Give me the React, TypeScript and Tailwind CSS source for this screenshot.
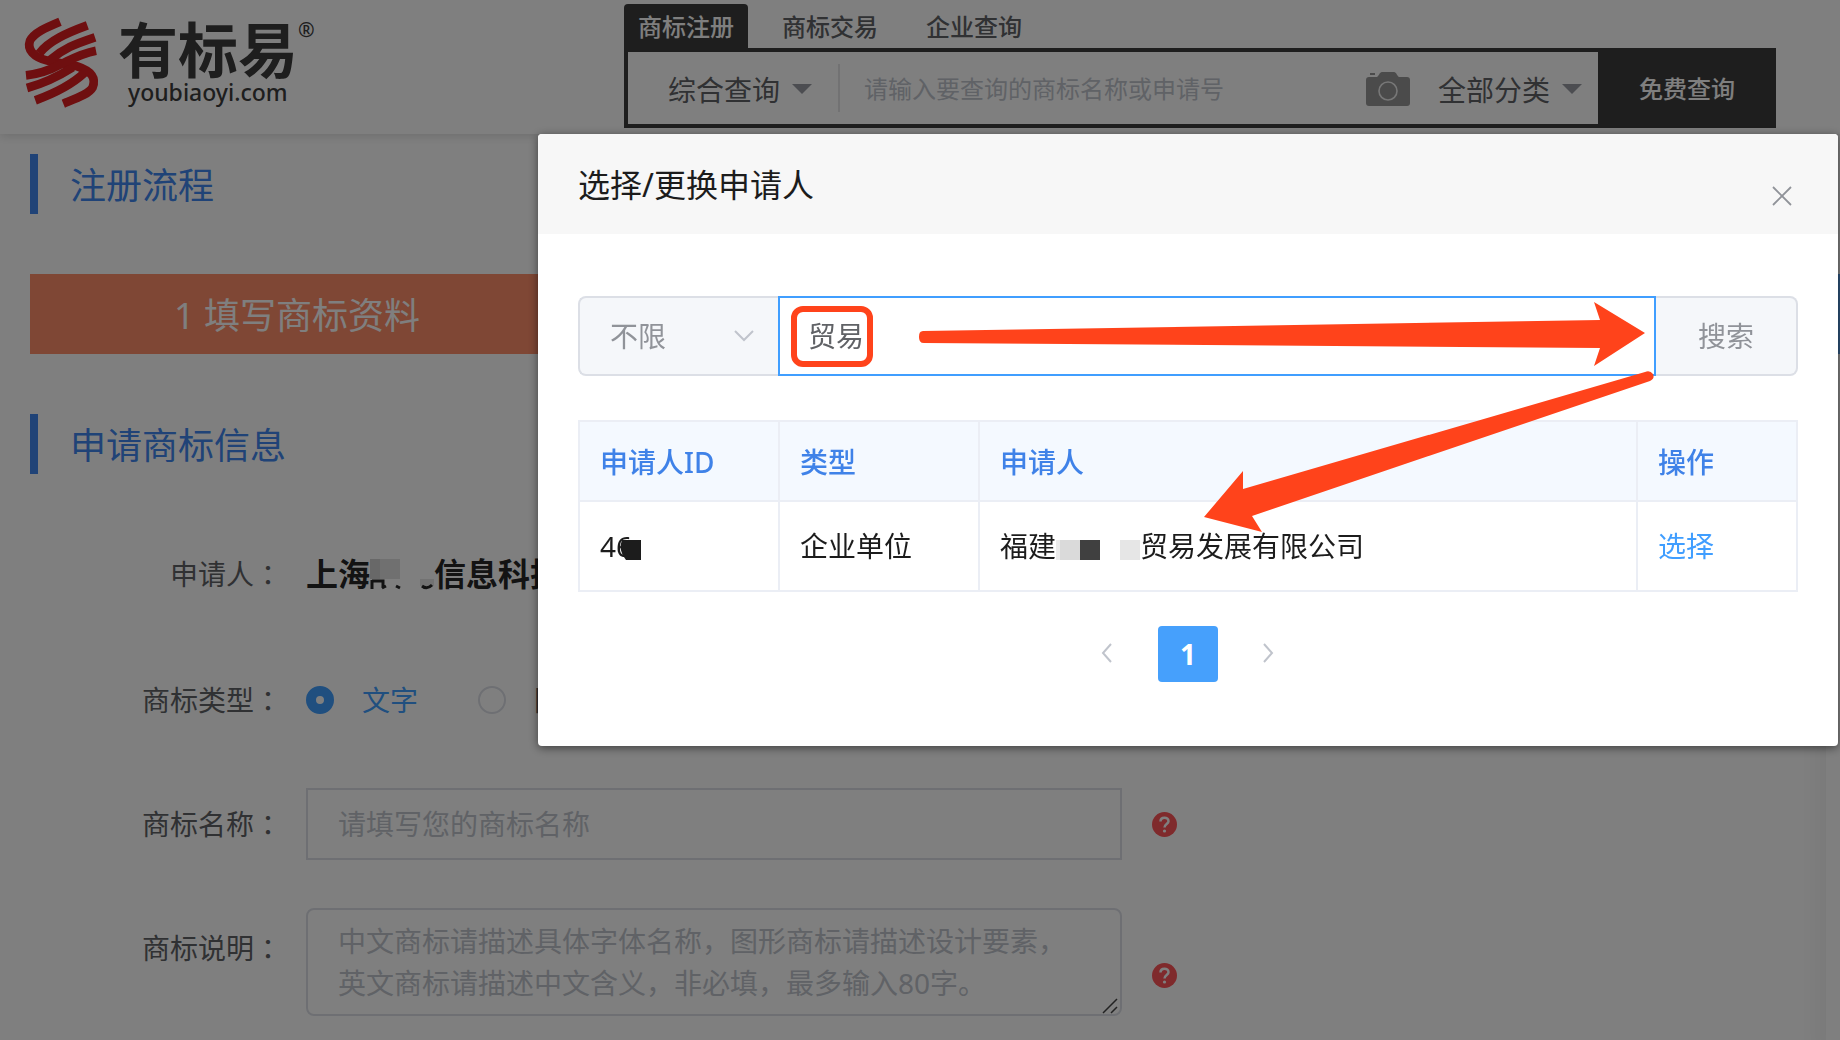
import type { ReactNode } from 'react';

const searchTabs = ['商标注册', '商标交易', '企业查询'];

function LogoMark() {
  return (
    <svg viewBox="0 0 300 315" className="h-[105px] w-[100px] shrink-0" fill="none" stroke="#de1e20" strokeWidth="26" aria-hidden="true">
      <path d="M138 35 C95 53 60 68 48 92 C38 120 60 142 100 152 C130 160 160 160 190 169 C235 184 246 205 236 232 C225 252 190 264 148 281" />
      <path d="M220 46 C160 68 105 92 76 130" />
      <path d="M243 82 C180 103 150 115 108 150" />
      <path d="M246 122 C195 132 165 152 138 164 C105 182 75 192 36 196" />
      <path d="M39 234 C100 217 135 198 176 172" />
      <path d="M64 271 C122 250 180 218 212 188" />
    </svg>
  );
}

function Camera() {
  return (
    <svg viewBox="0 0 44 35" className="h-[35px] w-11" aria-hidden="true">
      <path d="M3 5H11C13 4 13.500 0 16 0H28C30.500 0 31 4 33 5H41Q44 5 44 8V31Q44 34 41 34H3Q0 34 0 31V8Q0 5 3 5Z" fill="#969696" />
      <rect x="4" y="1" width="5" height="2" fill="#969696" />
      <circle cx="22" cy="19" r="9" fill="none" stroke="#eee" strokeWidth="1.6" />
    </svg>
  );
}

function HeaderSelect({ label, value }: { label: string; value: string }) {
  return (
    <div className="relative w-36 shrink-0">
      <select aria-label={label} className="h-11 w-full appearance-none bg-transparent pt-1 text-[28px] leading-10 text-[#606266] outline-none">
        <option>{value}</option>
      </select>
      <svg viewBox="0 0 20 10" className="pointer-events-none absolute top-[18px] right-0 h-[10px] w-5" aria-hidden="true">
        <path d="M0 0H20L10 10Z" fill="#989ba3" />
      </svg>
    </div>
  );
}

function SectionTitle({ children }: { children: ReactNode }) {
  return (
    <h2 className="flex h-[60px] items-center border-l-8 border-[#4086ee] pt-1 pl-8 text-4xl text-[#4086ee]">{children}</h2>
  );
}

function FieldLabel({ text, htmlFor, className = 'h-[72px]' }: { text: string; htmlFor?: string; className?: string }) {
  return (
    <label htmlFor={htmlFor} className={`mr-6 flex w-[252px] shrink-0 items-center justify-end text-[#606266] ${className}`}>
      {text}
      <span className="font-['Noto_Sans_CJK_TC',sans-serif]">：</span>
    </label>
  );
}

function HelpIcon({ className = '' }: { className?: string }) {
  return (
    <button type="button" aria-label="帮助" className={`ml-[30px] size-[25px] shrink-0 ${className}`}>
      <svg viewBox="0 0 25 25" fill="none">
        <circle cx="12.500" cy="12.500" r="12.500" fill="#ff5459" />
        <path d="M8.500 9.500C8.500 4.600 16.500 4.600 16.500 9.200C16.500 12 12.500 12 12.500 15.500" stroke="#fff" strokeWidth="2.500" />
        <circle cx="12.500" cy="19" r="1.600" fill="#fff" />
      </svg>
    </button>
  );
}

function Header() {
  return (
    <header className="relative z-10 flex h-[134px] bg-white shadow-[0_2px_10px_rgba(0,0,0,0.15)]">
      <a href="#" className="flex w-[624px] shrink-0 items-start pt-[10px] pl-[14px] text-[#3c3c3c]">
        <LogoMark />
        <span className="ml-1 flex flex-col">
          <span className="flex items-start">
            <span className="mt-1 text-[60px] leading-[72px] font-bold">有标易</span>
            <span className="mt-1 text-xl leading-8 font-medium">®</span>
          </span>
          <span className="-mt-2 ml-[10px] text-[23px] leading-7 font-medium">youbiaoyi.com</span>
        </span>
      </a>
      <div className="mr-16 flex-1 pt-1">
        <nav className="flex h-11 gap-5">
          {searchTabs.map((tab, i) => (
            <a
              key={tab}
              href="#"
              className={
                i === 0
                  ? 'flex w-[124px] items-center justify-center rounded-t bg-[#3c3c3c] pt-[2px] text-2xl font-medium text-white'
                  : 'flex w-[124px] items-center justify-center pt-[2px] text-2xl font-medium text-[#606266]'
              }
            >
              {tab}
            </a>
          ))}
        </nav>
        <form className="flex h-20">
          <div className="flex min-w-0 flex-1 items-center border-4 border-r-0 border-[#3c3c3c] pr-4 pl-10">
            <HeaderSelect label="查询方式" value="综合查询" />
            <div className="ml-[26px] h-12 w-[2px] shrink-0 bg-[#e4e4e6]" />
            <input
              aria-label="商标查询"
              placeholder="请输入要查询的商标名称或申请号"
              className="min-w-0 flex-1 px-6 pt-[2px] text-2xl text-[#606266] outline-none placeholder:text-[#c0c4cc]"
            />
            <button type="button" aria-label="图片查询" className="mt-[2px] mr-7">
              <Camera />
            </button>
            <HeaderSelect label="分类" value="全部分类" />
          </div>
          <button type="button" className="w-[178px] shrink-0 bg-[#3c3c3c] pt-[2px] text-2xl font-medium text-white">
            免费查询
          </button>
        </form>
      </div>
    </header>
  );
}

function RegistrationForm() {
  return (
    <form className="flex flex-col pt-16 pb-12">
      <div className="mb-[54px] flex items-center">
        <FieldLabel text="申请人" />
        <p className="flex items-center text-[32px] font-bold whitespace-nowrap text-[#262626]">
          上海
          <svg viewBox="0 0 64 32" className="h-8 w-16" aria-hidden="true">
            <rect y="1" width="10" height="20" fill="#d0d0d0" />
            <rect x="10" y="1" width="20" height="20" fill="#e0e0e0" />
            <rect x="50" y="21" width="20" height="7" fill="#e4e4e4" />
            <path d="M2 22V31M2 23H13V30M16 28L12 30M26 28L30 30M52 28Q57 32 62 27" fill="none" stroke="#262626" strokeWidth="3" />
          </svg>
          信息科技
        </p>
      </div>
      <div className="mb-[52px] flex items-center" role="radiogroup" aria-label="商标类型">
        <FieldLabel text="商标类型" />
        <label className="mr-[60px] flex items-center gap-7 text-[#409eff]">
          <input
            type="radio"
            name="kind"
            defaultChecked
            className="size-7 appearance-none rounded-full border-[10px] border-[#409eff] bg-white"
          />
          文字
        </label>
        <label className="flex items-center gap-7 text-[#606266]">
          <input type="radio" name="kind" className="size-7 appearance-none rounded-full border-2 border-[#dcdfe6] bg-white" />
          图形
        </label>
      </div>
      <div className="mb-12 flex items-center">
        <FieldLabel text="商标名称" htmlFor="mark-name" />
        <input
          id="mark-name"
          placeholder="请填写您的商标名称"
          className="h-[72px] w-[816px] border-2 border-[#dcdfe6] px-[30px] outline-none placeholder:text-[#c0c4cc]"
        />
        <HelpIcon />
      </div>
      <div className="flex items-start">
        <FieldLabel text="商标说明" htmlFor="mark-note" className="h-20" />
        <div className="relative h-[108px] w-[816px]">
          <textarea
            id="mark-note"
            placeholder={'中文商标请描述具体字体名称，图形商标请描述设计要素，\n英文商标请描述中文含义，非必填，最多输入80字。'}
            className="block h-full w-full resize-none overflow-hidden rounded-lg border-2 border-[#dcdfe6] px-[30px] py-[10px] leading-[42px] outline-none placeholder:text-[#c0c4cc]"
          />
          <svg viewBox="0 0 16 16" className="absolute right-1 bottom-[2px] size-4" stroke="#444" strokeWidth="1.500" aria-hidden="true">
            <path d="M1 15L15 1M9 15L15 9" />
          </svg>
        </div>
        <HelpIcon className="mb-7 self-end" />
      </div>
    </form>
  );
}

function Annotations() {
  return (
    <svg viewBox="0 0 1300 612" className="pointer-events-none absolute top-0 left-0 h-[612px] w-[1300px]" fill="#ff431b" aria-hidden="true">
      <rect x="256" y="175" width="76" height="55" rx="9" fill="none" stroke="#ff431b" strokeWidth="6" />
      <path d="M385 197L1062 186L1056 168L1107 199L1056 232L1062 214L386 209Q381 209 381 203Q381 197 385 197Z" />
      <path d="M1107 238Q1112 236 1115 240Q1117 245 1112 247L714 382L724 398L666 383L705 337L705 355Z" />
    </svg>
  );
}

function Pager() {
  return (
    <nav aria-label="分页" className="mt-[34px] flex h-14 items-center justify-center">
      <button type="button" aria-label="上一页" className="flex h-14 w-[60px] items-center pb-[2px] pl-[3px]">
        <svg viewBox="0 0 12 20" className="h-5 w-3" fill="none" stroke="#c0c4cc" strokeWidth="2" aria-hidden="true">
          <path d="M10 1L2 10L10 19" />
        </svg>
      </button>
      <button type="button" aria-current="page" className="h-14 w-[60px] rounded bg-[#46a0fc] font-bold text-white">
        1
      </button>
      <button type="button" aria-label="下一页" className="flex h-14 w-[60px] items-center justify-end pr-1 pb-[2px]">
        <svg viewBox="0 0 12 20" className="h-5 w-3" fill="none" stroke="#c0c4cc" strokeWidth="2" aria-hidden="true">
          <path d="M2 1L10 10L2 19" />
        </svg>
      </button>
    </nav>
  );
}

function ApplicantTable() {
  return (
    <table className="mt-11 w-full table-fixed border-collapse text-left">
      <colgroup>
        <col className="w-[200px]" />
        <col className="w-[200px]" />
        <col />
        <col className="w-40" />
      </colgroup>
      <thead>
        <tr className="h-20 bg-[#f4f9ff] text-[#3f82e8]">
          {['申请人ID', '类型', '申请人', '操作'].map((h) => (
            <th key={h} className="border-2 border-[#ebeef5] px-5 pt-[2px] font-medium">
              {h}
            </th>
          ))}
        </tr>
      </thead>
      <tbody>
        <tr className="h-[90px] text-[#1c1c1c]">
          <td className="border-2 border-[#ebeef5] px-5">
            <span className="relative inline-block">
              46
              <svg viewBox="0 0 23 22" className="absolute top-[13px] left-[18px] h-[22px] w-[23px]" aria-hidden="true">
                <path d="M4 1H23V21H8Q0 12 4 1Z" fill="#1c1c1c" />
              </svg>
            </span>
          </td>
          <td className="border-2 border-[#ebeef5] px-5">企业单位</td>
          <td className="border-2 border-[#ebeef5] px-5">
            <span className="flex items-center">
              福建
              <svg viewBox="0 0 84 28" className="h-7 w-[84px]" aria-hidden="true">
                <rect y="8" width="5" height="20" fill="#ebebeb" />
                <rect x="4" y="8" width="20" height="20" fill="#dadada" />
                <rect x="24" y="8" width="20" height="20" fill="#404040" />
                <rect x="64" y="8" width="20" height="20" fill="#e6e6e6" />
              </svg>
              贸易发展有限公司
            </span>
          </td>
          <td className="border-2 border-[#ebeef5] px-5">
            <button type="button" className="text-[#409eff]">
              选择
            </button>
          </td>
        </tr>
      </tbody>
    </table>
  );
}

function ApplicantDialog() {
  return (
    <div
      role="dialog"
      aria-label="选择/更换申请人"
      className="relative mt-[134px] mr-[2px] ml-[538px] flex-1 self-start overflow-hidden rounded bg-white shadow-[0_2px_10px_rgba(0,0,0,0.5)]"
    >
      <div className="flex h-[100px] items-center justify-between bg-[#f7f7f7] px-10">
        <h1 className="pt-[2px] text-[32px] text-[#1c1c1c]">选择/更换申请人</h1>
        <button type="button" aria-label="关闭" className="mt-6 mr-[6px]">
          <svg viewBox="0 0 20 20" className="size-5" stroke="#909399" strokeWidth="1.800" aria-hidden="true">
            <path d="M1 1L19 19M19 1L1 19" />
          </svg>
        </button>
      </div>
      <div className="px-10 pt-[62px] pb-16">
        <div className="flex h-20">
          <div className="relative w-[200px] shrink-0">
            <select
              aria-label="申请人类型"
              className="h-20 w-full appearance-none rounded-l-lg border-2 border-r-0 border-[#dcdfe6] bg-[#f5f7fa] pl-[30px] text-[#909399] outline-none"
            >
              <option>不限</option>
            </select>
            <svg viewBox="0 0 20 12" className="pointer-events-none absolute top-[34px] right-6 h-3 w-5" fill="none" stroke="#c0c4cc" strokeWidth="2" aria-hidden="true">
              <path d="M1 1L10 10L19 1" />
            </svg>
          </div>
          <input
            aria-label="申请人名称"
            defaultValue="贸易"
            className="min-w-0 flex-1 border-2 border-[#409eff] px-7 text-[#606266] outline-none"
          />
          <button type="button" className="w-[142px] shrink-0 rounded-r-lg border-2 border-l-0 border-[#dcdfe6] bg-[#f5f7fa] text-[#909399]">
            搜索
          </button>
        </div>
        <ApplicantTable />
        <Pager />
      </div>
      <Annotations />
    </div>
  );
}

export default function App() {
  return (
    <div className="relative min-h-screen overflow-hidden bg-white font-['Noto_Sans','Noto_Sans_CJK_SC',sans-serif] text-[28px] leading-[40px]">
      <aside className="absolute inset-y-0 right-0 w-[14px] bg-white shadow-[0_0_30px_rgba(0,0,0,0.12)]" />
      <Header />
      <main className="relative pt-5 pl-[30px]">
        <SectionTitle>注册流程</SectionTitle>
        <ol className="my-[60px] flex h-20 text-4xl text-white">
          <li className="flex w-[534px] items-center justify-center bg-[#fe8e6a] pt-1">1 填写商标资料</li>
          <li className="flex-1 bg-[#5aa4f2]" />
        </ol>
        <SectionTitle>申请商标信息</SectionTitle>
        <RegistrationForm />
      </main>
      <div className="fixed inset-0 z-20 flex bg-black/50">
        <ApplicantDialog />
      </div>
    </div>
  );
}
